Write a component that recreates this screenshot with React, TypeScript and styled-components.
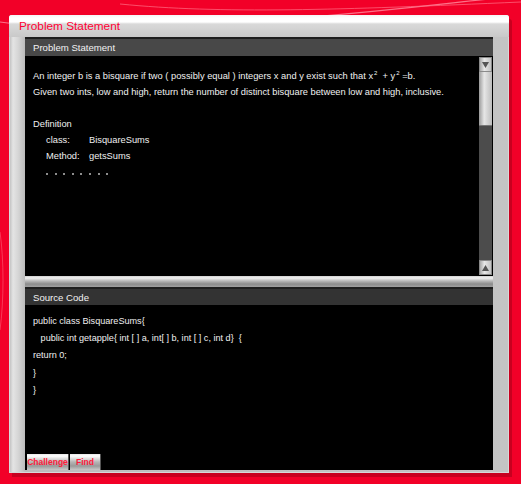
import styled, { createGlobalStyle } from "styled-components";

const GlobalStyle = createGlobalStyle`
  html, body {
    margin: 0;
    padding: 0;
    background: #f20028;
  }
  body {
    font-family: "Liberation Sans", Arial, sans-serif;
    width: 521px;
    height: 484px;
    overflow: hidden;
  }
`;

const Stage = styled.div`
  position: relative;
  width: 521px;
  height: 484px;
  padding: 15px 0 0 9px;
  box-sizing: border-box;
`;

const Backdrop = styled.svg`
  position: absolute;
  left: 0;
  top: 0;
  pointer-events: none;
`;

const Window = styled.div`
  position: relative;
  width: 500px;
  height: 458px;
  display: flex;
  flex-direction: column;
  background: linear-gradient(90deg, #b9b9b9 0px, #e4e4e4 4px, #d6d6d6 9px, #bcbcbc 16px, #c4c4c4 100%);
  border-radius: 3px 3px 0 0;
  box-shadow: 3px 4px 0 #c8001f, 0 0 0 1px #d8d8d8 inset;
`;

const TitleBar = styled.div`
  height: 22px;
  display: flex;
  align-items: center;
  padding-left: 10px;
  background: linear-gradient(180deg, #f4f4f4 0px, #ffffff 3px, #ffffff 7px, #d9d9d9 9px, #c9c9c9 22px);
  border-radius: 3px 3px 0 0;
  color: #ff0033;
  font-size: 11.8px;
`;

const Body = styled.div`
  flex: 1;
  display: flex;
  padding: 0 16px 3px 16px;
`;

const Content = styled.div`
  flex: 1;
  display: flex;
  flex-direction: column;
  background: #000;
`;

const PanelHeader = styled.div<{ h: number; shade: string }>`
  height: ${({ h }) => h}px;
  display: flex;
  align-items: center;
  padding-left: 8px;
  background: ${({ shade }) => shade};
  border-top: 2px solid #1e1e1e;
  box-sizing: border-box;
  color: #f2f2f2;
  font-size: 9.6px;
`;

const StatementPanel = styled.div`
  height: 220px;
  display: flex;
  background: #000;
`;

const StatementText = styled.div`
  flex: 1;
  padding: 12px 0 0 8px;
  color: #f0f0f0;
  font-size: 9.3px;
  line-height: 16px;
`;

const Line = styled.div<{ indent?: number }>`
  height: 16px;
  padding-left: ${({ indent }) => indent ?? 0}px;
  white-space: nowrap;
  display: flex;
  align-items: center;
`;

const Label = styled.span`
  width: 43px;
`;

const Dots = styled.div`
  display: flex;
  gap: 6.6px;
  padding: 9px 0 0 13px;
`;

const Dot = styled.span`
  width: 2px;
  height: 2px;
  background: #bdbdbd;
  border-radius: 1px;
`;

const Sup = styled.span`
  font-size: 6px;
  position: relative;
  top: -3px;
  margin-left: 1px;
`;

const ScrollBar = styled.div`
  width: 13px;
  margin: 1px 1px 1px 0;
  display: flex;
  flex-direction: column;
  background: #4c4c4c;
`;

const ArrowButton = styled.div`
  height: 15px;
  display: flex;
  align-items: center;
  justify-content: center;
  background: linear-gradient(90deg, #a9a9a9, #e8e8e8 40%, #c2c2c2);
  border: 1px solid #8a8a8a;
  box-sizing: border-box;
`;

const Thumb = styled.div`
  height: 53px;
  background: linear-gradient(90deg, #9a9a9a, #e6e6e6 40%, #bdbdbd);
  border-bottom: 1px solid #777;
`;

const Track = styled.div`
  flex: 1;
`;

const Divider = styled.div`
  height: 11px;
  background: linear-gradient(180deg, #d0d0d0 0px, #f2f2f2 2px, #b8b8b8 5px, #8c8c8c 8px, #a0a0a0 11px);
`;

const SourcePanel = styled.div`
  flex: 1;
  display: flex;
  flex-direction: column;
  justify-content: space-between;
  background: #000;
`;

const Code = styled.div`
  padding: 8px 0 0 8px;
  color: #f0f0f0;
  font-size: 9.1px;
  line-height: 17.2px;
  white-space: pre;
`;

const ButtonRow = styled.div`
  display: flex;
  gap: 1px;
  padding-left: 2px;
`;

const ToolButton = styled.div<{ w: number }>`
  width: ${({ w }) => w}px;
  height: 16px;
  display: flex;
  align-items: center;
  justify-content: center;
  background: linear-gradient(180deg, #e6e6e6 0px, #ffffff 2px, #b5b5b5 8px, #9a9a9a 12px, #c9c9c9 16px);
  border-right: 1px solid #555;
  box-sizing: border-box;
  color: #ff1a3a;
  font-size: 8.5px;
  font-weight: bold;
`;

const Triangle = ({ up }: { up?: boolean }) => (
  <svg width="7" height="6" viewBox="0 0 7 6">
    <polygon points={up ? "3.5,0 7,6 0,6" : "0,0 7,0 3.5,6"} fill="#555" />
  </svg>
);

const App = () => (
  <>
    <GlobalStyle />
    <Stage>
      <Backdrop width="521" height="484" viewBox="0 0 521 484">
        <path d="M0 22 C 60 30, 180 28, 300 18 S 470 0, 521 -4" stroke="#ff8da0" strokeWidth="1.2" fill="none" opacity="0.8" />
        <path d="M120 4 C 220 14, 340 10, 521 2" stroke="#ff6f86" strokeWidth="1" fill="none" opacity="0.7" />
        <path d="M0 232 C 4 260, 4 300, 0 330" stroke="#ff6f86" strokeWidth="1" fill="none" opacity="0.5" />
      </Backdrop>
      <Window>
        <TitleBar>Problem Statement</TitleBar>
        <Body>
          <Content>
            <PanelHeader h={19} shade="#484848">Problem Statement</PanelHeader>
            <StatementPanel>
              <StatementText>
                <Line>
                  An integer b is a bisquare if two ( possibly equal ) integers x and y exist such that x<Sup>2</Sup>&nbsp; + y<Sup>2</Sup>&nbsp;=b.
                </Line>
                <Line>Given two ints, low and high, return the number of distinct bisquare between low and high, inclusive.</Line>
                <Line />
                <Line>Definition</Line>
                <Line indent={13}>
                  <Label>class:</Label>BisquareSums
                </Line>
                <Line indent={13}>
                  <Label>Method:</Label>getsSums
                </Line>
                <Dots>
                  {Array.from({ length: 8 }).map((_, i) => (
                    <Dot key={i} />
                  ))}
                </Dots>
              </StatementText>
              <ScrollBar>
                <ArrowButton>
                  <Triangle />
                </ArrowButton>
                <Thumb />
                <Track />
                <ArrowButton>
                  <Triangle up />
                </ArrowButton>
              </ScrollBar>
            </StatementPanel>
            <Divider />
            <PanelHeader h={18} shade="#333333">Source Code</PanelHeader>
            <SourcePanel>
              <Code>
                {"public class BisquareSums{\n   public int getapple{ int [ ] a, int[ ] b, int [ ] c, int d}  {\nreturn 0;\n}\n}"}
              </Code>
              <ButtonRow>
                <ToolButton w={42}>Challenge</ToolButton>
                <ToolButton w={31}>Find</ToolButton>
              </ButtonRow>
            </SourcePanel>
          </Content>
        </Body>
      </Window>
    </Stage>
  </>
);

export default App;
